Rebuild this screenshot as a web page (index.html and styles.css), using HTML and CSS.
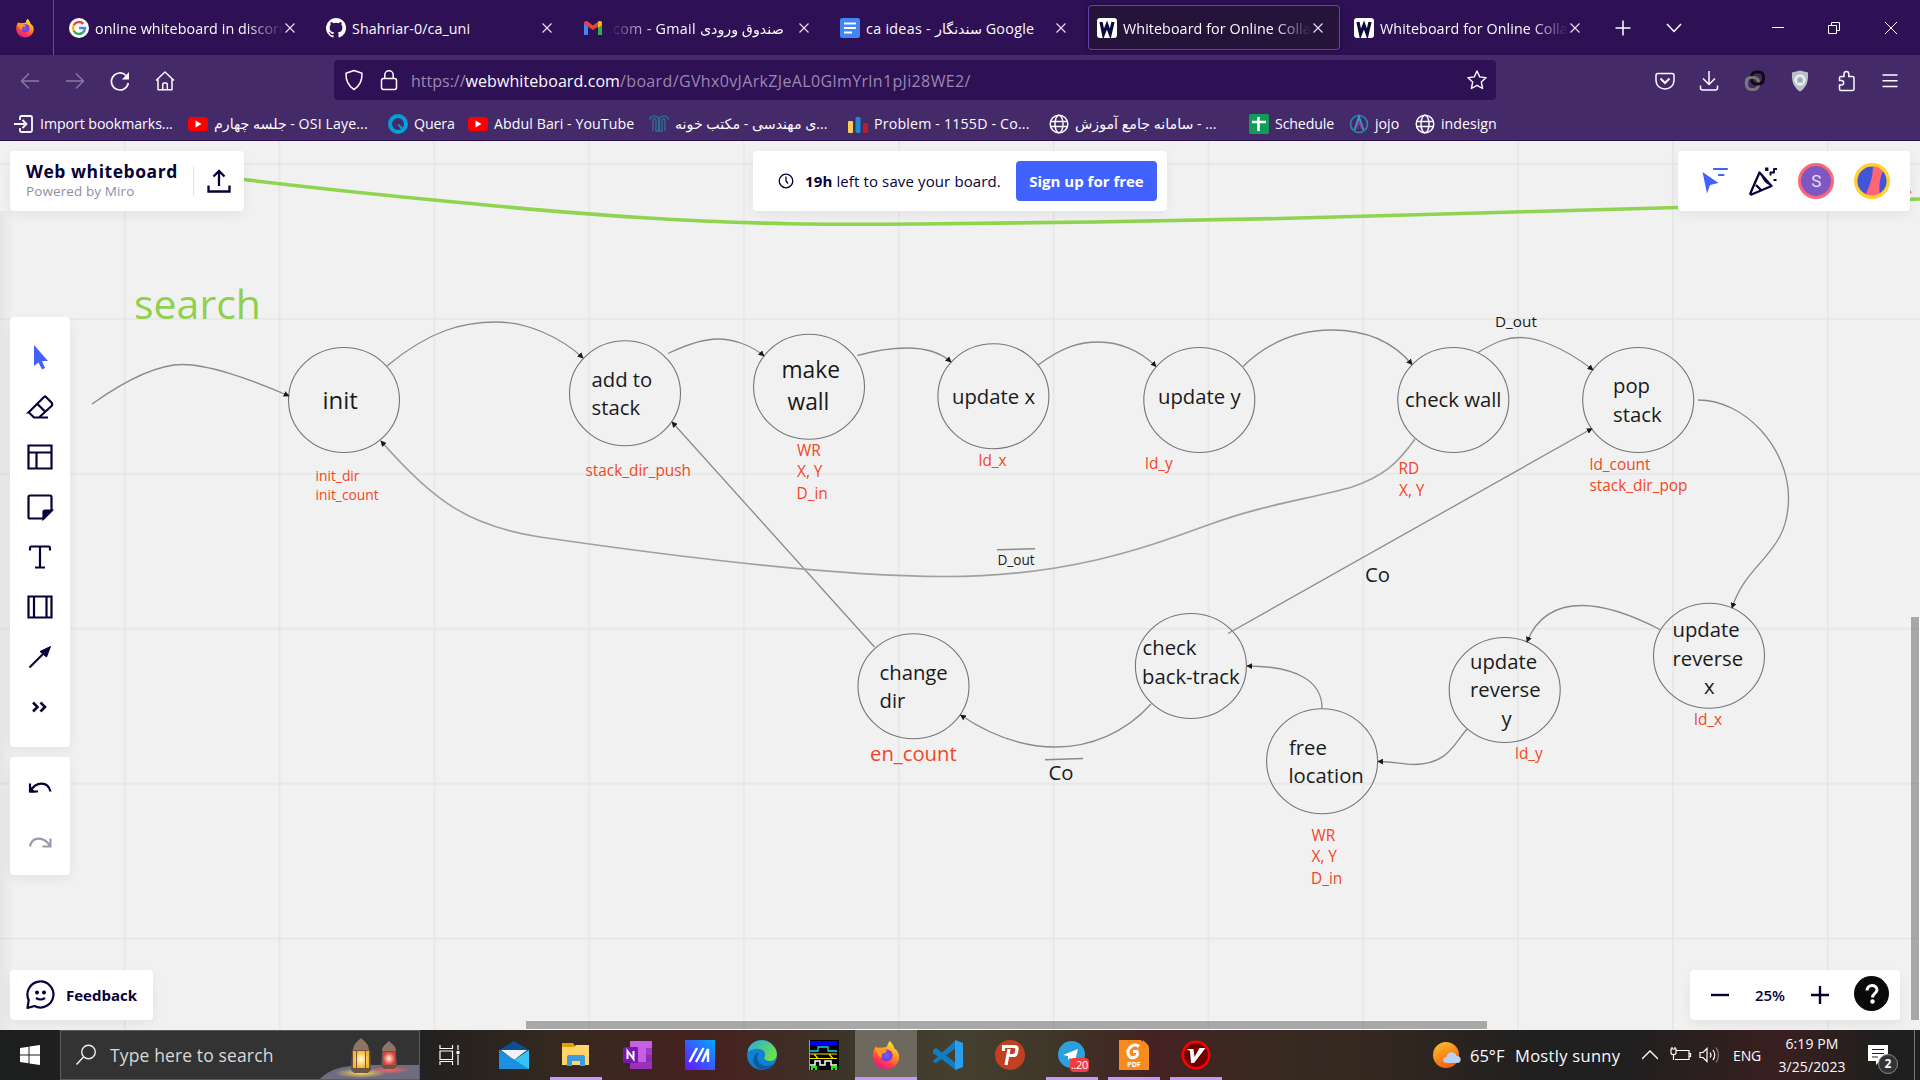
FILE: index.html
```html
<!DOCTYPE html>
<html lang="en">
<head>
<meta charset="utf-8">
<title>Whiteboard for Online Collaboration</title>
<link rel="stylesheet" href="styles.css">
</head>
<body>
<svg class="defs" width="0" height="0">
  <defs>
    <linearGradient id="ffBody" x1="0.8" y1="0" x2="0.3" y2="1"><stop offset="0" stop-color="#fff14a"/><stop offset=".4" stop-color="#ff9a1f"/><stop offset=".75" stop-color="#ff3b4e"/><stop offset="1" stop-color="#e31587"/></linearGradient>
    <radialGradient id="ffCore"><stop offset="0" stop-color="#5b6df0"/><stop offset="1" stop-color="#8a2be0"/></radialGradient>
    <linearGradient id="edgeTop" x1="0" y1="0" x2="1" y2="0.5"><stop offset="0" stop-color="#2aa7e6"/><stop offset="1" stop-color="#6be04a"/></linearGradient>
    <linearGradient id="sun" x1="0" y1="0" x2="0.5" y2="1"><stop offset="0" stop-color="#fbc52d"/><stop offset="1" stop-color="#f3600f"/></linearGradient>
    <linearGradient id="maBg" x1="1" y1="0" x2="0" y2="1"><stop offset="0" stop-color="#00aaff"/><stop offset="1" stop-color="#6a11ff"/></linearGradient>
    <radialGradient id="lampY"><stop offset="0" stop-color="#fffbe0"/><stop offset="1" stop-color="#f5b52b"/></radialGradient>
    <radialGradient id="lampR"><stop offset="0" stop-color="#fff0d0"/><stop offset="1" stop-color="#d8413f"/></radialGradient>
    <radialGradient id="glowY"><stop offset="0" stop-color="#ffd84a"/><stop offset="1" stop-color="#ffd84a" stop-opacity="0"/></radialGradient>
    <radialGradient id="glowR"><stop offset="0" stop-color="#ff6060"/><stop offset="1" stop-color="#ff6060" stop-opacity="0"/></radialGradient>
    <symbol id="firefox" viewBox="0 0 32 32">
      <path d="M20 1c3 3 4 5 5 8 3 2 5 5 5 9 0 7-6 13-14 13S2 25 2 17c0-5 1-8 4-11v4c2-2 4-2 6-2 2 0 4 0 5-1 1-2 1-4 3-6z" fill="url(#ffBody)"/>
      <circle cx="16.500" cy="16.500" r="6.500" fill="url(#ffCore)"/>
      <path d="M4 9c3-2 6-1 8 1l5 1c0 2-2 3-4 3-2 1-2 3-1 5-4-1-6-5-8-10z" fill="#ff9a22"/>
    </symbol>
    <symbol id="youtube" viewBox="0 0 20 20"><rect y="3" width="20" height="14" rx="3.500" fill="#f00"/><path d="M7.500 6.500v7l6-3.500z" fill="#fff"/></symbol>
    <symbol id="globe" viewBox="0 0 20 20"><g fill="none" stroke="#fbfbfe" stroke-width="1.500"><circle cx="10" cy="10" r="8.800"/><ellipse cx="10" cy="10" rx="4" ry="8.800"/><path d="M1.500 7.500h17M1.500 12.500h17"/></g></symbol>
    <symbol id="wlogo" viewBox="0 0 20 20"><rect width="20" height="20" rx="3" fill="#fff"/><path d="M4 4l2.500 12L10 7l3.200 9L16 4" fill="none" stroke="#0a0a3c" stroke-width="3.200"/></symbol>
    <symbol id="x" viewBox="0 0 12 12"><path d="M1.500 1.500l9 9m0-9l-9 9" stroke="#e6dcf5" stroke-width="1.200"/></symbol>
  </defs>
</svg>

<header class="tabs">
  <div class="pinned"><svg width="20" height="20"><use href="#firefox"/></svg></div>
  <div class="tab">
    <svg class="fav" viewBox="0 0 20 20"><circle cx="10" cy="10" r="10" fill="#fff"/><g fill="none" stroke-width="2.400"><path d="M14.300 5.800A6 6 0 0 0 4.700 7.300" stroke="#ea4335"/><path d="M4.700 7.300a6 6 0 0 0 0 5.400" stroke="#fbbc05"/><path d="M4.700 12.700a6 6 0 0 0 9.200 1.800" stroke="#34a853"/><path d="M13.900 14.500A6 6 0 0 0 16 10h-6" stroke="#4285f4"/></g></svg>
    <span class="title fade">online whiteboard in discord</span><svg class="close"><use href="#x"/></svg>
  </div>
  <div class="tab">
    <svg class="fav" viewBox="0 0 16 16"><path fill="#fff" d="M8 0a8 8 0 0 0-2.530 15.590c.4.070.55-.17.55-.38v-1.490c-2.010.37-2.530-.49-2.690-.94-.09-.23-.48-.94-.82-1.130-.28-.15-.68-.52-.01-.53.63-.01 1.080.58 1.230.82.720 1.210 1.870.87 2.330.66.070-.52.280-.87.510-1.070-1.780-.2-3.640-.89-3.640-3.950 0-.87.310-1.590.82-2.150-.08-.2-.36-1.020.08-2.120 0 0 .67-.21 2.200.82a7.500 7.500 0 0 1 4 0c1.530-1.040 2.200-.82 2.200-.82.44 1.100.16 1.920.08 2.120.51.56.82 1.270.82 2.150 0 3.070-1.870 3.750-3.650 3.950.29.25.54.73.54 1.480v2.200c0 .21.15.46.55.38A8 8 0 0 0 8 0z"/></svg>
    <span class="title">Shahriar-0/ca_uni</span><svg class="close"><use href="#x"/></svg>
  </div>
  <div class="tab">
    <svg class="fav" viewBox="0 0 20 20"><path d="M1 5v12h4V9l5 4z" fill="#4285f4"/><path d="M19 5v12h-4V9l-5 4z" fill="#34a853"/><path d="M1 5.500C1 3 3.500 2.500 5 3.700l5 3.800 5-3.800c1.500-1.200 4-.7 4 1.800L10 12z" fill="#ea4335"/><path d="M15 3.700c1.500-1.200 4-.7 4 1.800V7l-4 3z" fill="#fbbc04"/></svg>
    <span class="title fade-start gmail">.com - Gmail صندوق ورودی</span><svg class="close"><use href="#x"/></svg>
  </div>
  <div class="tab">
    <svg class="fav" viewBox="0 0 20 20"><rect width="20" height="20" rx="2" fill="#4285f4"/><path d="M4 5.500h12M4 10h12M4 14.500h8" stroke="#fff" stroke-width="2"/></svg>
    <span class="title docs">ca ideas - سندنگار Google</span><svg class="close"><use href="#x"/></svg>
  </div>
  <div class="tab active">
    <svg class="fav"><use href="#wlogo"/></svg>
    <span class="title fade">Whiteboard for Online Colla</span><svg class="close"><use href="#x"/></svg>
  </div>
  <div class="tab">
    <svg class="fav"><use href="#wlogo"/></svg>
    <span class="title fade">Whiteboard for Online Colla</span><svg class="close"><use href="#x"/></svg>
  </div>
  <div class="tab-actions">
    <svg width="16" height="16" viewBox="0 0 16 16"><path d="M8 .5v15M.5 8h15" stroke="#fff" stroke-width="1.500"/></svg>
    <svg width="16" height="16" viewBox="0 0 16 16"><path d="M1 4l7 7.500L15 4" fill="none" stroke="#fff" stroke-width="1.500"/></svg>
  </div>
  <div class="window-buttons">
    <svg width="12" height="12"><path d="M0 5.500h12" stroke="#fff"/></svg>
    <svg width="12" height="12"><path d="M.5 3.500h8v8h-8zM3.500 3V.5h8v8H9" fill="none" stroke="#fff"/></svg>
    <svg width="14" height="14"><path d="M1 1l12 12M13 1L1 13" stroke="#fff"/></svg>
  </div>
</header>

<nav class="toolbar">
  <div class="nav-buttons">
    <svg width="20" height="20" viewBox="0 0 20 20"><path d="M19 10H1.500M9 2.500L1.500 10 9 17.500" fill="none" stroke="#8b79a5" stroke-width="1.400"/></svg>
    <svg width="20" height="20" viewBox="0 0 20 20"><path d="M1 10h17.500M11 2.500l7.500 7.500L11 17.500" fill="none" stroke="#8b79a5" stroke-width="1.400"/></svg>
    <svg width="20" height="20" viewBox="0 0 20 20"><path d="M18.300 12A8.500 8.500 0 1 1 16 4.500" fill="none" stroke="#fbfbfe" stroke-width="1.700"/><path d="M19 1v7.500h-7z" fill="#fbfbfe"/></svg>
    <svg width="20" height="20" viewBox="0 0 20 20"><path d="M1 9.500L10 1l9 8.500M3 8v10.800h14V8M7.700 18.800v-5.300q0-1.500 1.500-1.500h1.600q1.500 0 1.500 1.500v5.300" fill="none" stroke="#fbfbfe" stroke-width="1.500" stroke-linejoin="round"/></svg>
  </div>
  <div class="url-bar">
    <svg width="20" height="22" viewBox="0 0 20 22"><path d="M10 1.500l8 2.800c.3 8-2 12.500-8 16.200-6-3.700-8.300-8.200-8-16.200z" fill="none" stroke="#fbfbfe" stroke-width="1.500" stroke-linejoin="round"/></svg>
    <svg class="lock" width="18" height="22" viewBox="0 0 18 22"><path d="M4.800 9.500V6a4.200 4.200 0 0 1 8.400 0v3.500" fill="none" stroke="#fbfbfe" stroke-width="1.500"/><rect x="1.500" y="9.500" width="15" height="11" rx="2" fill="none" stroke="#fbfbfe" stroke-width="1.500"/></svg>
    <span class="url">https://<b>webwhiteboard.com</b><span class="path">/board/GVhx0vJArkZJeAL0GlmYrln1pJi28WE2/</span></span>
    <svg class="star" width="20" height="20" viewBox="0 0 20 20"><path d="M10 1l2.700 5.900 6.300.8-4.700 4.300 1.300 6.500L10 15.300l-5.600 3.200L5.700 12 1 7.700l6.300-.8z" fill="none" stroke="#fbfbfe" stroke-width="1.400" stroke-linejoin="round"/></svg>
  </div>
  <div class="extensions">
    <svg width="20" height="20" viewBox="0 0 20 20"><path d="M3 2.500h14q2 0 2 2V9c0 12-18 12-18 0V4.500q0-2 2-2z" fill="none" stroke="#fbfbfe" stroke-width="1.500"/><path d="M5.500 7.500L10 12l4.500-4.500" fill="none" stroke="#fbfbfe" stroke-width="2"/></svg>
    <svg width="20" height="20" viewBox="0 0 20 20"><path d="M10 0v13M4 7.500l6 6 6-6M1.500 14.500V17q0 2 2 2h13q2 0 2-2v-2.500" fill="none" stroke="#fbfbfe" stroke-width="1.500"/></svg>
    <svg width="22" height="22" viewBox="0 0 22 22"><g fill="none" stroke-width="3.200"><rect x="2.500" y="7.500" width="12" height="12" rx="5" stroke="#777"/><rect x="7.500" y="2" width="12" height="12" rx="5" stroke="#0c0c0c"/><path d="M2.500 14v-2q0-4.500 5-4.500h2" stroke="#777"/></g></svg>
    <svg width="20" height="22" viewBox="0 0 20 22"><path d="M10 .5l8 2c.5 9-1.500 15-8 19C3.500 17.500 1.500 11.500 2 2.500z" fill="#b9c2cb"/><circle cx="10" cy="10" r="4.500" fill="none" stroke="#f2f5f8" stroke-width="2"/><circle cx="10" cy="10" r="1.500" fill="#8a97a4"/></svg>
    <svg width="20" height="22" viewBox="0 0 20 22"><path d="M5 20.500q-1.500 0-1.500-1.500v-4h1.800c3.200 0 3.200-4.600 0-4.600H3.500V8q0-1.500 1.500-1.500h3V4c0-3.500 4.800-3.500 4.800 0v2.500h3.700q1.500 0 1.500 1.500v11q0 1.500-1.500 1.500z" fill="none" stroke="#fbfbfe" stroke-width="1.500"/></svg>
    <svg width="16" height="16" viewBox="0 0 16 16"><path d="M.5 2h15M.5 7.700h15M.5 13.500h15" stroke="#fbfbfe" stroke-width="1.500"/></svg>
  </div>
</nav>

<div class="bookmarks">
  <div class="bm bm-import"><svg viewBox="0 0 20 20"><path d="M6 6V3.500q0-1.500 1.500-1.500h9q1.500 0 1.500 1.500v13q0 1.500-1.500 1.500h-9Q6 18 6 16.500V14M0 10h12M8.500 6l4 4-4 4" fill="none" stroke="#fbfbfe" stroke-width="1.800"/></svg><span>Import bookmarks...</span></div>
  <div class="bm bm-osi"><svg><use href="#youtube"/></svg><span>جلسه چهارم - OSI Laye...</span></div>
  <div class="bm bm-quera"><svg viewBox="0 0 20 20"><circle cx="10" cy="10" r="8" fill="none" stroke="#00a0d8" stroke-width="4"/><path d="M10.500 10.500l5 6" stroke="#00a0d8" stroke-width="2"/></svg><span>Quera</span></div>
  <div class="bm bm-bari"><svg><use href="#youtube"/></svg><span>Abdul Bari - YouTube</span></div>
  <div class="bm bm-maktab"><svg viewBox="0 0 20 20"><path d="M.5 6C1 1 9 1 9.500 5v12H7V6C6 4 4 4 4 6v11M19.500 6C19 1 11 1 10.500 5v12H13V6c1-2 3-2 3 0v11" fill="none" stroke="#2c6f95" stroke-width="1.300"/></svg><span dir="rtl">...ی مهندسی - مکتب خونه</span></div>
  <div class="bm bm-problem"><svg viewBox="0 0 20 20"><rect y="7" width="5" height="12" rx="1" fill="#f9cf58"/><rect x="7.500" y="3" width="5" height="16" rx="1" fill="#1b8ccc"/><rect x="15" y="9" width="5" height="10" rx="1" fill="#b81f2a"/></svg><span>Problem - 1155D - Co...</span></div>
  <div class="bm bm-samane"><svg><use href="#globe"/></svg><span dir="rtl">... - سامانه جامع آموزش</span></div>
  <div class="bm bm-schedule"><svg viewBox="0 0 20 20"><rect width="20" height="20" rx="2" fill="#0f9d58"/><path d="M9.500 3v14M3 8h14" stroke="#fff" stroke-width="2.600"/></svg><span>Schedule</span></div>
  <div class="bm bm-jojo"><svg viewBox="0 0 20 20"><circle cx="10" cy="10" r="8.500" fill="none" stroke="#2589b5" stroke-width="1.600"/><path d="M5.500 16L10 3l4.500 13M10 3v4" fill="none" stroke="#2f9ac9" stroke-width="2"/><path d="M7.500 14.500L10 8l2.500 6.500" fill="none" stroke="#a0307e" stroke-width="1.500"/></svg><span>jojo</span></div>
  <div class="bm bm-indesign"><svg><use href="#globe"/></svg><span>indesign</span></div>
</div>

<main class="board">
  <svg class="canvas" viewBox="0 141 1920 889" width="1920" height="889">
    <defs>
      <marker id="tip" viewBox="0 0 8 8" refX="7" refY="4" markerWidth="6" markerHeight="6" markerUnits="userSpaceOnUse" orient="auto"><path d="M0 0l8 4-8 4z" fill="#1a1a1a"/></marker>
      <pattern id="grid" x="124" y="163" width="154.800" height="154.900" patternUnits="userSpaceOnUse"><path d="M.8 0v155M0 1h155" stroke="#e5e5e5" stroke-width="1.500"/></pattern>
    </defs>
    <rect x="0" y="141" width="1920" height="889" fill="url(#grid)"/>
    <path class="marker-line" d="M240 179C330 190 520 210 640 217.500S830 224.500 920 224 1200 220.500 1280 218.500 1550 211 1678 207.500L1920 199"/>
    <path d="M1909 190l2 3" stroke="#ff5a6e" stroke-width="1.500"/>
    <g class="nodes">
      <ellipse cx="344" cy="400" rx="55.500" ry="52.500"/><ellipse cx="625" cy="393.200" rx="55.500" ry="52.500"/>
      <ellipse cx="809" cy="386.800" rx="55.500" ry="52.500"/><ellipse cx="993.400" cy="396.200" rx="55.500" ry="52.500"/>
      <ellipse cx="1199.300" cy="400" rx="55.500" ry="52.500"/><ellipse cx="1453.300" cy="400" rx="55.500" ry="52.500"/>
      <ellipse cx="1638.200" cy="400" rx="55.500" ry="52.500"/><ellipse cx="913.500" cy="686.300" rx="55.500" ry="52.500"/>
      <ellipse cx="1190.900" cy="666" rx="55.500" ry="52.500"/><ellipse cx="1322.100" cy="761.300" rx="55.500" ry="52.500"/>
      <ellipse cx="1504.700" cy="690" rx="55.500" ry="52.500"/><ellipse cx="1709" cy="655.700" rx="55.500" ry="52.500"/>
    </g>
    <g class="edges">
      <path d="M92 404C130 377 160 364.500 183 364.500S246 377 289 396"/>
      <path d="M387 366C430 330 464 322 496 322S562 338 583 358"/>
      <path d="M668 353.500C690 343 705 339 718 339S750 344 764 356"/>
      <path d="M857.500 355.500C877 350 890 348 907 348S940 352 951 362"/>
      <path d="M1038 365C1064 346 1080 342 1099 342S1140 350 1156 366.500"/>
      <path d="M1243 366.500C1272 338 1305 330 1332 330S1390 338 1412 364.500"/>
      <path d="M1477 353C1497 341 1507 337.500 1520 337.500S1560 344 1593 370"/>
      <path d="M1698 400C1745 400 1788.500 448 1788.500 498C1788.500 555 1747 560 1732 608"/>
      <path d="M1660 629.500C1630 614 1605 605.500 1582 605.500S1538 614 1527 642"/>
      <path d="M1467 729C1454 744 1448 764 1414 764.500C1402 764.500 1395 761.500 1378 761.500"/>
      <path d="M1322 708C1322 682 1298 666 1247 666"/>
      <path d="M1151 704C1125 733 1090 747 1056 747S990 735 960.500 715"/>
      <path d="M874.500 647L672 422"/>
      <path d="M1228 633.500L1592 428.500"/>
      <path class="long" d="M1415 439C1398 463 1384 476 1352 487C1310 499 1265 504 1208 525C1150 546 1070 577 943 576.500C820 576 650 553 540 537C470 526 435 503 381 441"/>
    </g>
    <path class="bar" d="M997 549.800l38-1M1045 759.700l38-1.200"/>
    <text class="heading" x="134" y="318.500" textLength="127">search</text>
    <g class="labels">
      <text class="xl" x="322.500" y="409.300">init</text>
      <text x="591.500" y="386.700">add to</text><text x="591.500" y="415">stack</text>
      <text class="lg" x="781.500" y="378.300">make</text><text class="lg" x="787.500" y="410">wall</text>
      <text x="952" y="404">update x</text><text x="1158" y="404">update y</text>
      <text x="1405" y="407.300">check wall</text>
      <text x="1613" y="393.300">pop</text><text x="1613" y="421.700">stack</text>
      <text x="879.500" y="680">change</text><text x="879.500" y="708">dir</text>
      <text x="1142.500" y="655">check</text><text x="1142" y="683.500">back-track</text>
      <text x="1289" y="754.500">free</text><text x="1288.500" y="783">location</text>
      <text x="1470" y="668.700">update</text><text x="1470" y="697">reverse</text><text x="1501.500" y="725.500">y</text>
      <text x="1672.500" y="637">update</text><text x="1672.500" y="665.500">reverse</text><text x="1704" y="694">x</text>
      <text x="1365" y="581.800">Co</text><text x="1048.500" y="779.800">Co</text>
      <text class="sm" x="1495" y="326.700">D_out</text><text class="xs" x="997.500" y="565">D_out</text>
    </g>
    <g class="signals">
      <text class="xs" x="315.500" y="480.600">init_dir</text><text class="xs" x="315.500" y="499.800">init_count</text>
      <text x="585.500" y="475.700">stack_dir_push</text>
      <text x="797" y="456">WR</text><text x="797" y="477.300">X, Y</text><text x="796.500" y="499">D_in</text>
      <text x="978.500" y="466.300">ld_x</text><text x="1145" y="469.300">ld_y</text>
      <text x="1398.500" y="474">RD</text><text x="1399" y="495.700">X, Y</text>
      <text x="1589.500" y="469.700">ld_count</text><text x="1589.500" y="491.300">stack_dir_pop</text>
      <text class="md" x="870" y="760.700">en_count</text>
      <text x="1311.500" y="840.700">WR</text><text x="1311.500" y="862">X, Y</text><text x="1311" y="883.700">D_in</text>
      <text x="1515" y="759.300">ld_y</text><text x="1694" y="725">ld_x</text>
    </g>
  </svg>

  <div class="edge-shade"></div>

  <section class="panel brand">
    <div class="brand-text"><strong>Web whiteboard</strong><small>Powered by Miro</small></div>
    <svg width="24" height="24" viewBox="0 0 24 24"><path d="M1.500 16.500v6h21v-6M12 17V2M6.500 7.500L12 2l5.500 5.500" fill="none" stroke="#050038" stroke-width="2.300"/></svg>
  </section>

  <section class="panel notice">
    <svg width="16" height="16" viewBox="0 0 16 16"><circle cx="8" cy="8" r="6.800" fill="none" stroke="#050038" stroke-width="1.300"/><path d="M8 3.500V8l2 2.500" fill="none" stroke="#050038" stroke-width="1.300"/></svg>
    <span class="notice-text"><b>19h</b> left to save your board.</span>
    <button>Sign up for free</button>
  </section>

  <section class="panel people">
    <svg width="28" height="28" viewBox="0 0 28 28"><path d="M1.500 5l16 11-8.500 2-3 8.500z" fill="#4262ff"/><path d="M13 2h13M18 8h4.500" stroke="#4262ff" stroke-width="2.200" stroke-linecap="round"/></svg>
    <svg width="30" height="30" viewBox="0 0 30 30"><g fill="none" stroke="#050038" stroke-width="2.300" stroke-linejoin="round"><path d="M10.500 6.500l12 13.500-20 8.500q-1.500 0-1-1.500zM7 19l5 5M13 9q3 7 8.500 9.500"/><path d="M21.500 9.500V6.500h3.500V3h3" stroke-width="1.900"/></g><path d="M17 2.500h1.500v1.500H17zM24.500 14h3" stroke="#050038" stroke-width="1.800" fill="#050038"/></svg>
    <div class="avatar avatar-s">S</div>
    <svg width="36" height="36" viewBox="0 0 36 36"><circle cx="18" cy="18" r="16" fill="#4255d8"/><path d="M19 2c0 12-3 20-8 31 5 2 11 2 15 0-1-8-1-16 3-25z" fill="#ff6575"/><circle cx="18" cy="18" r="16.300" fill="none" stroke="#ffd02f" stroke-width="3.400"/></svg>
  </section>

  <aside class="panel tools">
    <svg viewBox="0 0 30 30"><path d="M9 3v21l4.500-3.500 3.500 7 3-1.500-3-7h6z" fill="#4262ff"/></svg>
    <svg viewBox="0 0 30 30"><path d="M3.500 20.500L19 5q1-1 2 0l5 5q2.500 2.500 0 4.500L14 25.500H9l-5-5zM12 11.500l8.500 8.500M14 25.500h9" /></svg>
    <svg viewBox="0 0 30 30"><path d="M3.500 3.500h23v23h-23zM3.500 10.500h23M11.500 10.500v16"/></svg>
    <svg viewBox="0 0 30 30"><path d="M5 3.500h20q1.500 0 1.500 1.500v13.500l-8 8H5q-1.500 0-1.500-1.500V5q0-1.500 1.500-1.500z"/><path d="M18.500 26.500V20q0-1.500 1.500-1.500h6.500z" fill="#050038"/></svg>
    <svg viewBox="0 0 30 30"><path d="M5 8.500V6q0-1.500 1.500-1.500h17Q25 4.500 25 6v2.500M15 4.500v21M10 25.500h10"/></svg>
    <svg viewBox="0 0 30 30"><path d="M3.500 4.500h23v21h-23zM9 4.500v21M21.500 4.500v21"/></svg>
    <svg viewBox="0 0 30 30"><path d="M4.500 25.500L21 9"/><path d="M25.500 4.500L15 9.500l6.500 5.500z" fill="#050038" stroke="#050038" stroke-width="1"/></svg>
    <svg viewBox="0 0 30 30"><path d="M8 10.500l4.500 4.500L8 19.500M15.500 10.500L20 15l-4.500 4.500" stroke-width="2.500"/></svg>
  </aside>

  <aside class="panel history">
    <svg viewBox="0 0 30 30"><path d="M5 7.500v8h8M5.500 15C11 5 23 5 25.500 15.500"/><path d="M4.500 9v7.500h6z" fill="#050038" stroke="none"/></svg>
    <svg viewBox="0 0 30 30" class="off"><path d="M25.500 7.500v8h-8M25 15C19 5 7 5 5 15.500"/></svg>
  </aside>

  <section class="panel feedback">
    <svg width="30" height="30" viewBox="0 0 30 30"><path d="M2.500 28l1.200-8A13 13 0 1 1 9.500 26z" fill="none" stroke="#050038" stroke-width="2.200" stroke-linejoin="round"/><circle cx="12" cy="12.500" r="2" fill="#050038"/><circle cx="19" cy="12.500" r="2" fill="#050038"/><path d="M11 18q4.500 3 9 0" fill="none" stroke="#050038" stroke-width="2.200"/></svg>
    <span>Feedback</span>
  </section>

  <section class="panel zoom">
    <svg width="18" height="18"><path d="M0 9h18" stroke="#050038" stroke-width="2.400"/></svg>
    <span>25%</span>
    <svg width="18" height="18"><path d="M0 9h18M9 0v18" stroke="#050038" stroke-width="2.400"/></svg>
    <div class="help"><svg width="14" height="20" viewBox="0 0 14 20"><path d="M2 6.500C2 0 12 0 12 6c0 3.500-4.500 3.500-4.500 7.500" fill="none" stroke="#fff" stroke-width="3"/><circle cx="7.500" cy="17.500" r="2.200" fill="#fff"/></svg></div>
  </section>

  <div class="scroll-x"></div>
  <div class="scroll-y"></div>
</main>

<footer class="taskbar">
  <div class="start"><svg width="20" height="20" viewBox="0 0 20 20"><path d="M0 3l8.500-1.200v7.700H0zM9.500 1.600L20 0v9.500H9.500zM0 10.500h8.500v7.700L0 17zM9.500 10.500H20V20L9.500 18.400z" fill="#fff"/></svg></div>
  <div class="search">
    <svg width="22" height="22" viewBox="0 0 22 22"><circle cx="13.500" cy="8" r="6.800" fill="none" stroke="#eee" stroke-width="1.400"/><path d="M8.500 13L1.500 20.500" stroke="#eee" stroke-width="1.500"/></svg>
    <span>Type here to search</span>
    <svg class="lamps" width="100" height="48" viewBox="0 0 100 48">
      <path d="M1 48C14 34 35 34 60 34h40v14z" fill="#6f6c82"/>
      <ellipse cx="42" cy="42" rx="26" ry="5" fill="url(#glowY)"/><ellipse cx="71" cy="39" rx="20" ry="4" fill="url(#glowR)"/>
      <path d="M33 19h18l1 20-3 3H35l-3-3z" fill="#6b5346"/><path d="M34 19c0-6 5-9 8-12 3 3 8 6 8 12z" fill="#8d7564"/><rect x="34" y="20" width="16" height="17" fill="url(#lampY)"/><path d="M37.500 20v17M46.500 20v17" stroke="#7a5a2e"/>
      <path d="M63 20h14l1 15-3 3H65l-3-3z" fill="#6b5346"/><path d="M63 20c0-5 4-7 7-10 3 3 7 5 7 10z" fill="#8d7564"/><rect x="64" y="21" width="12" height="13" fill="url(#lampR)"/>
    </svg>
  </div>
  <div class="apps">
    <div class="app view"><svg width="22" height="20" viewBox="0 0 22 20"><path d="M1 0v3.500h12.500V0M1 20v-3.500h12.500V20M1 6h12.500v8.500H1zM19 0v5M19 9.500V20" fill="none" stroke="#fff" stroke-width="1.200"/><path d="M17.500 6h3v3h-3z" fill="#fff"/></svg></div>
    <div class="app"><svg viewBox="0 0 30 30"><path d="M0 10L15 1l15 9v3H0z" fill="#0a4f94"/><path d="M2 10h26L15 20z" fill="#f2f2f2"/><path d="M0 10l15 10 15-10v19H0z" fill="#36c3f5"/><path d="M0 10l30 19H0z" fill="#1b8fe0"/></svg></div>
    <div class="app open"><svg viewBox="0 0 30 30"><path d="M1 3h11l2 3h14v19H1z" fill="#dfa000"/><path d="M1 7h12l2-2h13v20H1z" fill="#ffd468"/><path d="M6 26V17q0-2 2-2h14q2 0 2 2v9h-5v-5h-8v5z" fill="#3d9be0"/></svg></div>
    <div class="app"><svg viewBox="0 0 30 30"><path d="M7 1h22v28H7z" fill="#c55fe8"/><path d="M23 8h6v7h-6z" fill="#a43bc6"/><path d="M23 15h6v7h-6z" fill="#8f2bb5"/><path d="M7 22h22v7H7z" fill="#9a31bd"/><rect y="7" width="15" height="16" rx="1" fill="#7719aa"/><path d="M4.500 19v-8l6 8v-8" fill="none" stroke="#fff" stroke-width="2"/></svg></div>
    <div class="app"><svg viewBox="0 0 30 30"><rect width="30" height="30" fill="url(#maBg)"/><path d="M4.500 22L12 8M11 22l7.500-14M17 22l6-13v13" fill="none" stroke="#fff" stroke-width="2.400"/></svg></div>
    <div class="app"><svg viewBox="0 0 30 30"><circle cx="15" cy="15" r="15" fill="#1180d2"/><path d="M1 10C4-1 20-4 28 8c4 7 1 13-5 13-5 0-7-2-5-5 1-5-4-8-9-7-3 0-6 1-8 3z" fill="url(#edgeTop)"/><path d="M12 12c-4 6-1 13 7 14 4 0 6-1 8-2-5 8-16 7-20 0-2-5 0-10 5-12z" fill="#0c5aa6"/></svg></div>
    <div class="app"><svg viewBox="0 0 30 30"><rect width="30" height="30" fill="#000"/><path d="M1 1h27v4H1z" fill="#00f"/><g fill="none"><path d="M1 11h8V7h10v4h9" stroke="#1ad6e0" stroke-width="1.300"/><path d="M1 14h27M1 18.500h27M5 14l4 4.500M20 14l4 4.500" stroke="#f5ea00" stroke-width="1.200"/><path d="M1 25h5v-4h5v4h5v-4h6v4h6" stroke="#fff" stroke-width="1.500"/><path d="M3 30v-3h4v3M23 30v-3h4v3" stroke="#0f0" stroke-width="2"/></g><path d="M.5 0v30" stroke="#999"/></svg></div>
    <div class="app open current"><svg><use href="#firefox"/></svg></div>
    <div class="app"><svg viewBox="0 0 30 30"><path d="M0 10l3-2 20 15v7L0 13zM0 21l23-21v8L3 23l-3-1z" fill="#0f7cc4"/><path d="M22 0l8 3v24l-8 3z" fill="#2a9ff0"/></svg></div>
    <div class="app"><svg viewBox="0 0 30 30"><circle cx="15" cy="15" r="15" fill="#c33f22"/><path d="M11 25l3-16M8.500 11V6.500H19q3.500 0 3 3l-.5 3q-.5 3-3.500 3h-4" fill="none" stroke="#fff" stroke-width="3.200"/></svg></div>
    <div class="app open tg"><svg viewBox="0 0 30 30"><circle cx="14.500" cy="14.500" r="13.500" fill="#2aa1dc"/><path d="M6 15l15-6-3 12-5-3-2 2v-4z" fill="#fff"/></svg><span class="badge">..20</span></div>
    <div class="app open foxit"><svg viewBox="0 0 30 30"><path d="M0 0h22l8 7v23H0z" fill="#f78b1f"/><path d="M24 0l6 6h-6z" fill="#f78b1f"/><path d="M20 6.500q-4-3-8 0c-6 5-2 13 3 11 4-1 4-4 3-6h-4" fill="none" stroke="#fff" stroke-width="3"/></svg><span class="pdf">PDF</span></div>
    <div class="app open"><svg viewBox="0 0 30 30"><circle cx="15" cy="15" r="13.200" fill="#6e0000" stroke="#f00" stroke-width="2.600"/><path d="M5.500 9h7l1 8 5-9h6L13 23h-3l-1-12z" fill="#fff"/></svg></div>
  </div>
  <div class="weather">
    <svg width="30" height="28" viewBox="0 0 30 28"><circle cx="13" cy="13" r="13" fill="url(#sun)"/><path d="M14 21c-5 0-5-6-.5-6 1-6 9-6 10-1 6 0 5 7 1 7z" fill="#b9d0f7"/></svg>
    <span class="deg">65°F</span><span class="cond">Mostly sunny</span>
  </div>
  <div class="tray">
    <svg width="16" height="10"><path d="M0 9l8-8 8 8" fill="none" stroke="#fff" stroke-width="1.300"/></svg>
    <svg width="22" height="16" viewBox="0 0 22 16"><path d="M6 3.500h13v9H5M19 6.500h1.500v3H19M1 2h5v4q0 1.500-2.500 1.500T1 6zM2 0v2M5 0v2M3.500 8v5" fill="none" stroke="#fff" stroke-width="1.200"/></svg>
    <svg width="22" height="18" viewBox="0 0 22 18"><path d="M1 6.500h3L8 2.500v13l-4-4H1z" fill="none" stroke="#fff" stroke-width="1.200"/><path d="M11 6.500q2 2.500 0 5M14 4q3.500 5 0 10" fill="none" stroke="#fff" stroke-width="1.200"/><path d="M17 1.500q5 7.500 0 15" fill="none" stroke="#8a8080" stroke-width="1.200"/></svg>
    <span class="lang">ENG</span>
  </div>
  <div class="clock"><span>6:19 PM</span><span>3/25/2023</span></div>
  <div class="notif"><svg width="20" height="20" viewBox="0 0 20 20"><path d="M0 0h20v16h-8l-4 4v-4H0z" fill="#fff"/><path d="M4 4.500h12M4 8.500h12M4 12h6" stroke="#222" stroke-width="1.200"/></svg><b>2</b></div>
  <div class="peek"></div>
</footer>
</body>
</html>
```
FILE: styles.css
```css
* { box-sizing: border-box; }
body {
  margin: 0;
  width: 1920px;
  height: 1080px;
  overflow: hidden;
  display: flex;
  flex-direction: column;
  font-family: "Open Sans", "DejaVu Sans", sans-serif;
  color: #fbfbfe;
}
svg { display: block; flex: none; }
.defs { position: absolute; }

/* tab strip */
.tabs { height: 55px; background: #2e1055; display: flex; align-items: center; flex: none; }
.pinned { width: 54px; height: 55px; border-right: 1px solid #675081; display: flex; align-items: center; padding-left: 15px; }
.tab { width: 252px; height: 45px; margin: 0 0 0 5px; padding: 1px 8px 0 9px; display: flex; align-items: center; border-radius: 4px; flex: none; }
.tab:nth-child(2) { margin-left: 6px; }
.tab.active { background: #25133a; box-shadow: inset 0 0 0 1px #6a3fb0, 0 0 4px #1c0738; }
.fav { width: 20px; height: 20px; }
.title { margin-left: 6px; width: 188px; font-size: 14.300px; letter-spacing: 0.080px; white-space: nowrap; overflow: hidden; }
.gmail, .docs { letter-spacing: 0.300px; }
.fade { -webkit-mask-image: linear-gradient(90deg, #000 80%, transparent); mask-image: linear-gradient(90deg, #000 80%, transparent); }
.fade-start { -webkit-mask-image: linear-gradient(270deg, #000 75%, transparent); mask-image: linear-gradient(270deg, #000 75%, transparent); }
.close { width: 12px; height: 12px; margin-left: 1px; }
.tab-actions { margin-left: 18px; width: 70px; display: flex; gap: 35px; align-items: center; }
.window-buttons { margin-left: auto; display: flex; align-items: center; gap: 44px; margin-right: 22px; }

/* navigation bar */
.toolbar { height: 52px; background: #452a6a; display: flex; align-items: center; flex: none; }
.nav-buttons { display: flex; gap: 25px; padding-left: 20px; width: 334px; }
.url-bar { width: 1162px; height: 40px; margin-top: -2px; border-radius: 4px; background: #2e1055; display: flex; align-items: center; padding: 0 9px 0 10px; }
.lock { margin-left: 16px; }
.url { margin-left: 13px; font-size: 16px; color: #9a88b0; white-space: nowrap; padding-top: 2px; }
.url b { font-weight: 400; color: #fbfbfe; letter-spacing: .080px; }
.url .path { letter-spacing: .360px; }
.star { margin-left: auto; }
.extensions { margin-left: auto; display: flex; align-items: center; gap: 24.500px; padding-right: 22px; }
.extensions svg:nth-child(n+5) { margin-left: 1.500px; }

/* bookmarks */
.bookmarks { height: 34px; background: #452a6a; border-bottom: 1px solid #2e1055; display: flex; align-items: center; padding-left: 14px; flex: none; }
.bm { display: flex; align-items: center; gap: 6px; flex: none; font-size: 14.200px; white-space: nowrap; }
.bm svg { width: 20px; height: 20px; }
.bm-import { width: 174px; letter-spacing: -.080px; }
.bm-osi { width: 200px; letter-spacing: .100px; }
.bm-quera { width: 80px; letter-spacing: -.150px; }
.bm-bari { width: 181px; letter-spacing: .060px; }
.bm-maktab { width: 199px; letter-spacing: .250px; }
.bm-problem { width: 201px; letter-spacing: .180px; }
.bm-samane { width: 200px; letter-spacing: .300px; }
.bm-schedule { width: 100px; letter-spacing: -.150px; }
.bm-jojo { width: 66px; }

/* board */
.board { position: relative; height: 889px; background: #f1f1f1; flex: none; overflow: hidden; color: #050038; }
.canvas { font-family: "Open Sans", "Noto Sans", sans-serif; }
.marker-line { fill: none; stroke: #8fd44f; stroke-width: 3.600px; }
.nodes ellipse { fill: none; stroke: #757575; stroke-width: 1.100px; }
.edges path { fill: none; stroke: #8a8a8a; stroke-width: 1.300px; marker-end: url(#tip); }
.edges .long { stroke: #a0a0a0; stroke-width: 1.700px; }
.bar { fill: none; stroke: #8a8a8a; stroke-width: 1.400px; }
.heading { font-size: 41px; fill: #8fd14f; }
.labels { font-size: 20.300px; fill: #1a1a1a; }
.labels .xl { font-size: 24px; }
.labels .lg { font-size: 22.800px; }
.labels .sm { font-size: 15.300px; }
.labels .xs { font-size: 13.600px; }
.signals { font-size: 15.400px; fill: #f24726; }
.signals .md { font-size: 20.300px; }
.signals .xs { font-size: 13.800px; }
.edge-shade { position: absolute; left: 0; top: 70px; width: 14px; height: 819px; background: linear-gradient(90deg, rgba(5, 0, 56, .05), rgba(5, 0, 56, 0)); }

.panel { position: absolute; background: #fff; border-radius: 4px; display: flex; align-items: center; box-shadow: 0 4px 12px rgba(5, 0, 56, .06); }
.brand { left: 10px; top: 10px; width: 234px; height: 60px; padding-left: 16px; }
.brand-text { width: 168px; height: 30px; border-right: 1px solid #e0e0e6; display: flex; flex-direction: column; justify-content: center; margin-right: 13px; }
.brand-text strong { font-size: 17.500px; line-height: 21px; margin-top: -1px; letter-spacing: .550px; white-space: nowrap; }
.brand-text small { font-size: 13.500px; line-height: 19px; color: #8f8da6; white-space: nowrap; letter-spacing: .1px; }
.notice { left: 753px; top: 10px; width: 414px; height: 60px; padding: 0 10px 0 25px; }
.notice-text { margin-left: 11px; font-size: 15px; letter-spacing: .120px; white-space: nowrap; }
.notice button { margin-left: auto; width: 141px; height: 40px; border: 0; border-radius: 4px; background: #4262ff; color: #fff; font: 700 15px "Open Sans", sans-serif; white-space: nowrap; padding: 0; }
.people { right: 10px; top: 10px; width: 232px; height: 60px; padding: 0 20px 0 23px; justify-content: space-between; }
.avatar { width: 36px; height: 36px; border-radius: 50%; border: 3px solid #ff6575; background: #7e57c2; color: #e8e0f5; display: flex; align-items: center; justify-content: center; font: 17px Roboto, sans-serif; }
.tools { left: 10px; top: 176px; width: 60px; height: 430px; flex-direction: column; gap: 20px; padding-top: 25px; }
.tools svg, .history svg { width: 30px; height: 30px; fill: none; stroke: #050038; stroke-width: 2.200px; }
.tools svg:first-child { stroke: none; }
.history { left: 10px; top: 616px; width: 60px; height: 118px; flex-direction: column; gap: 25px; padding-top: 19px; }
.history .off { stroke: #9b99af; }
.feedback { left: 10px; top: 829px; width: 143px; height: 50px; padding-left: 15px; gap: 11px; font-weight: 700; font-size: 15px; }
.zoom { left: 1690px; top: 829px; width: 210px; height: 50px; padding-left: 21px; font-weight: 600; font-size: 15px; }
.zoom span { width: 82px; text-align: center; }
.help { width: 35px; height: 35px; border-radius: 50%; background: #0a0a0a; display: flex; align-items: center; justify-content: center; margin: -3px 0 0 25px; }
.scroll-x { position: absolute; left: 526px; top: 880px; width: 961px; height: 8px; background: rgba(0, 0, 0, .3); box-shadow: 0 1px #fff, 0 -1px #f8f8f8; }
.scroll-y { position: absolute; left: 1911px; top: 476px; width: 8px; height: 403px; background: rgba(0, 0, 0, .3); box-shadow: 1px 0 #fff; }

/* taskbar */
.taskbar { height: 50px; display: flex; align-items: center; flex: none; background: linear-gradient(90deg, #1d1f1e 0, #222020 22%, #35291f 29%, #46211f 37%, #3c3529 44%, #45402f 50%, #3f3528 55%, #452221 60%, #382a21 66%, #33271f 72%, #202020 80%, #211f1f 85%, #3a1f1f 93%, #1e1f1e 98%); }
.start { width: 60px; height: 50px; display: flex; align-items: center; justify-content: center; }
.search { width: 360px; height: 50px; border: 1px solid #5c5c5c; background: #333; display: flex; align-items: center; padding-left: 14px; font-size: 17.500px; color: #d8d8d8; }
.search span { margin-left: 13px; width: 168px; white-space: nowrap; letter-spacing: .130px; }
.lamps { margin-left: auto; }
.apps { display: flex; width: 1003px; }
.app { position: relative; width: 62px; height: 50px; display: flex; align-items: center; justify-content: center; }
.app.view { width: 63px; padding-right: 3px; }
.app svg { width: 30px; height: 30px; }
.app.view svg { width: 22px; height: 20px; }
.app.open::after { content: ""; position: absolute; left: 5px; right: 5px; bottom: 0; height: 3px; background: #c39af8; }
.app.current { background: #6e695e; }
.app.current::after { left: 0; right: 0; }
.badge { position: absolute; left: 29px; top: 28px; width: 19px; height: 14px; border-radius: 4px; background: #f23c3c; color: #fff; font-size: 11px; line-height: 13px; text-align: center; letter-spacing: -.3px; }
.pdf { position: absolute; left: 16px; width: 30px; top: 31px; color: #fff; font-size: 7px; line-height: 8px; font-weight: 700; text-align: center; }
.weather { display: flex; align-items: center; width: 213px; padding-left: 10px; font-size: 16.500px; white-space: nowrap; padding-top: 1px; }
.deg { margin-left: 7px; width: 45px; }
.cond { letter-spacing: .3px; }
.tray { display: flex; align-items: center; width: 130px; padding-left: 6px; gap: 12px; font-size: 14px; }
.tray svg:nth-child(3) { margin-left: -5px; }
.lang { letter-spacing: -.1px; }
.clock { width: 92px; display: flex; flex-direction: column; align-items: center; font-size: 14px; line-height: 23px; letter-spacing: .1px; }
.notif { position: relative; margin-left: 10px; width: 46px; height: 20px; }
.notif b { position: absolute; left: 10px; top: 9px; width: 20px; height: 20px; border-radius: 50%; background: #333; border: 1px solid #888; font-size: 12px; line-height: 17px; text-align: center; }
.peek { width: 1px; height: 50px; background: #777; }
```
